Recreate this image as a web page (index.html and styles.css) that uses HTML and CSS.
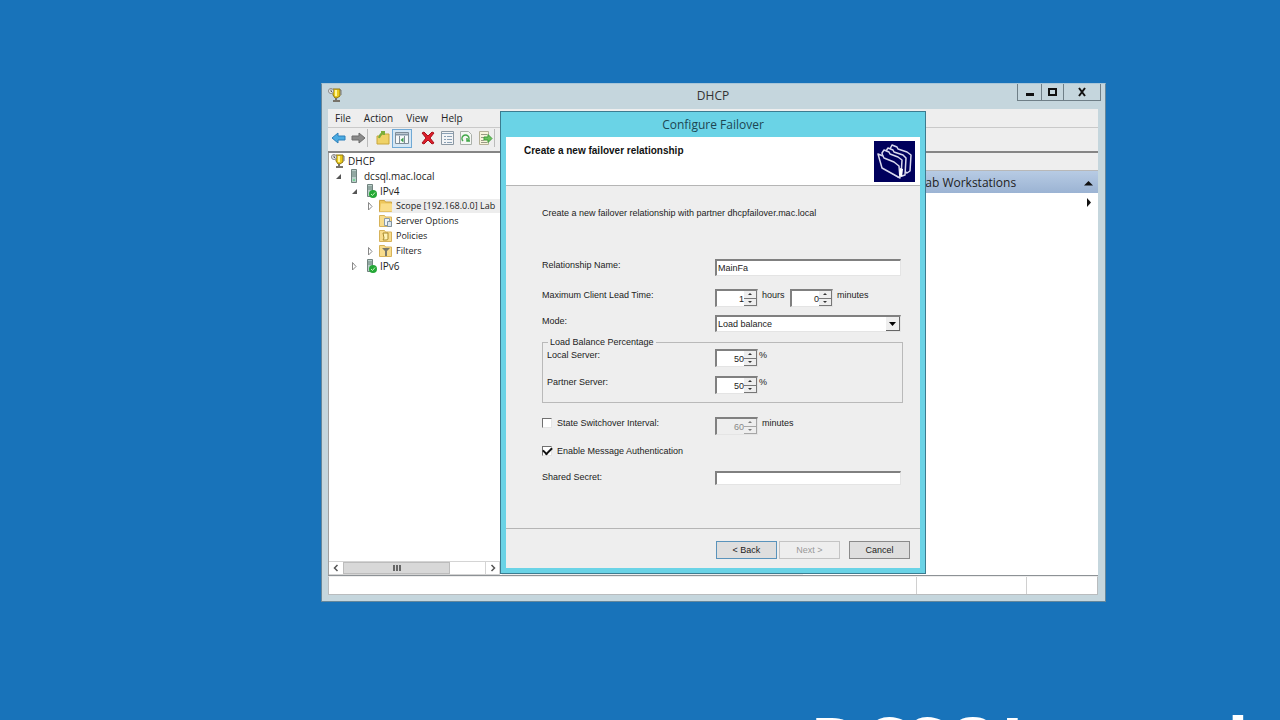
FILE: index.html
```html
<!DOCTYPE html>
<html lang="en">
<head>
<meta charset="utf-8">
<title>DHCP</title>
<link rel="stylesheet" href="styles.css">
</head>
<body>
<svg class="defs" width="0" height="0" aria-hidden="true">
  <symbol id="i-dhcp" viewBox="0 0 14 14"><path d="M5 1h7v7l-3 2H7L5 7z" fill="#e9c91c" stroke="#8d7410"/><path d="M8 2v6" stroke="#fff799" stroke-width="2"/><path d="M12 2h1v5" fill="none" stroke="#777"/><path d="M8 10v2M5 13h7" stroke="#77736a" stroke-width="2"/><circle cx="3" cy="3" r="2.500" fill="#eee" stroke="#888"/><path d="M3 1.500v2h1" fill="none" stroke="#555"/></symbol>
  <symbol id="i-server" viewBox="0 0 14 14"><path d="M4.500.500h5v13h-5z" fill="#b9cfc9" stroke="#71837f"/><path d="M5 3h4M5 5h4M5 7h4" stroke="#6b807b"/><path d="M6 11h2" stroke="#3d6" /></symbol>
  <symbol id="i-serverok" viewBox="0 0 14 14"><path d="M4.500.500h5v12h-5z" fill="#b9cfc9" stroke="#71837f"/><path d="M5 3h4M5 5h4" stroke="#6b807b"/><circle cx="10" cy="10" r="4" fill="#24a737"/><path d="M8 10l1.500 1.500L12 8.500" fill="none" stroke="#c4f5b8"/></symbol>
  <symbol id="i-folder" viewBox="0 0 14 14"><path d="M.500 1.500h5l1 1.500h6v9.500H.500z" fill="#edc65c" stroke="#cfa543"/><path d="M2 4.500h11v8H1z" fill="#fadd88"/></symbol>
  <symbol id="i-options" viewBox="0 0 14 14"><path d="M.500 1.500h5l1 1.500h6v9.500H.500z" fill="#f8dc8c" stroke="#d7b35a"/><path d="M5.500 4.500h5v7h-5z" fill="#eef3f7" stroke="#8a9aa8"/><path d="M8.500 7.500h4v5h-4z" fill="#dde5ea" stroke="#8193a1"/></symbol>
  <symbol id="i-policy" viewBox="0 0 14 14"><path d="M.500 1.500h5l1 1.500h6v9.500H.500z" fill="#f8dc8c" stroke="#d7b35a"/><path d="M4 4h5v6q0 1-2 1H4l1-2z" fill="#fff3b8" stroke="#a98a2c"/></symbol>
  <symbol id="i-filter" viewBox="0 0 14 14"><path d="M.500 1.500h5l1 1.500h6v9.500H.500z" fill="#f8dc8c" stroke="#d7b35a"/><path d="M3 4h8L8 7v5H6V7z" fill="#78786c"/></symbol>
</svg>

<main class="desktop">
  <p class="hostname">DCSQL.mac.local</p>

  <section class="window" aria-label="DHCP">
    <header class="titlebar">
      <svg class="app-icon"><use href="#i-dhcp"/></svg>
      <h1 class="title">DHCP</h1>
      <div class="caption-buttons">
        <button class="caption min" aria-label="Minimize"><svg width="10" height="10"><path d="M1 7.500h8" stroke="#111" stroke-width="3"/></svg></button>
        <button class="caption max" aria-label="Maximize"><svg width="10" height="10"><path d="M1 2h7v6H1z" fill="none" stroke="#111" stroke-width="2"/></svg></button>
        <button class="caption close" aria-label="Close"><svg width="10" height="10"><path d="M2 1l6 8M8 1L2 9" stroke="#111" stroke-width="2"/></svg></button>
      </div>
    </header>
    <div class="client">
      <nav class="menu">
        <button>File</button><button>Action</button><button>View</button><button>Help</button>
      </nav>
      <div class="toolbar">
        <button class="tool" aria-label="Back"><svg width="16" height="16"><path d="M1 8l6-5v3h7v4H7v3z" fill="#4aabe2" stroke="#2c7fb9"/></svg></button>
        <button class="tool" aria-label="Forward"><svg width="16" height="16"><path d="M15 8L9 3v3H2v4h7v3z" fill="#8a8a8a" stroke="#6d6d6d"/></svg></button>
        <span class="sep"></span>
        <button class="tool" aria-label="Up one level"><svg width="16" height="16"><path d="M2 6h4l1-2h7v10H2z" fill="#efd267" stroke="#c8a63c"/><path d="M4 8q1-4 4-5M6 2h3v3" fill="none" stroke="#7cae3a" stroke-width="2"/></svg></button>
        <button class="tool active" aria-label="Show console tree" aria-pressed="true"><svg width="16" height="16"><path d="M1.500 2.500h13v11h-13z" fill="#f6f8f9" stroke="#7e8c97"/><path d="M2 4.500h12" stroke="#8496a6" stroke-width="2"/><path d="M5.500 6v7M10.500 6v7" stroke="#7e8c97"/><path d="M9.500 7.500v5l-3-2.500z" fill="#3e9b4c"/></svg></button>
        <button class="tool" aria-label="Delete"><svg width="16" height="16"><path d="M2 3l2-1 4 4 4-4 2 1-4 5 4 5-2 1-4-4-4 4-2-1 4-5z" fill="#dd1f2b" stroke="#a80f19"/></svg></button>
        <button class="tool" aria-label="Properties"><svg width="16" height="16"><path d="M2.500 1.500h12v13h-12z" fill="#f2f4f6" stroke="#8b98a3"/><path d="M3 3.500h11M5 6.500h2M5 9.500h2M5 12.500h2M8 6.500h5M8 9.500h5M8 12.500h5" stroke="#8aa0b4"/></svg></button>
        <button class="tool" aria-label="Refresh"><svg width="16" height="16"><path d="M2.500 1.500h8l3 3v10h-11z" fill="#f5f7f4" stroke="#aab0aa"/><path d="M5 11a3.500 3.500 0 1 1 5 0M12 11H9V8" fill="none" stroke="#43a84a" stroke-width="1.500"/></svg></button>
        <button class="tool" aria-label="Export list"><svg width="16" height="16"><path d="M2.500 1.500h9v13h-9z" fill="#f8f4dc" stroke="#b5b098"/><path d="M4 4.500h6M4 7.500h3M4 10.500h3M4 12.500h6" stroke="#9a9a86"/><path d="M7 7h4V4.500L15 8.500l-4 4V10H7z" fill="#6cc25c" stroke="#3f9b3c"/></svg></button>
        <span class="sep"></span>
      </div>
      <div class="panes">
        <div class="tree-pane">
          <ul class="tree">
            <li><div class="node root"><svg class="ico"><use href="#i-dhcp"/></svg>DHCP</div></li>
            <li><div class="node l1"><svg class="arr"><path d="M8 3v5H3z" fill="#555"/></svg><svg class="ico"><use href="#i-server"/></svg>dcsql.mac.local</div></li>
            <li><div class="node l2"><svg class="arr"><path d="M8 3v5H3z" fill="#555"/></svg><svg class="ico"><use href="#i-serverok"/></svg>IPv4</div></li>
            <li><div class="node l3"><svg class="arr"><path d="M3.500 1.500L7 5.500 3.500 9z" fill="#fff" stroke="#888"/></svg><span class="selected"><svg class="ico"><use href="#i-folder"/></svg>Scope [192.168.0.0] Lab</span></div></li>
            <li><div class="node l3"><span class="arr"></span><svg class="ico"><use href="#i-options"/></svg>Server Options</div></li>
            <li><div class="node l3"><span class="arr"></span><svg class="ico"><use href="#i-policy"/></svg>Policies</div></li>
            <li><div class="node l3"><svg class="arr"><path d="M3.500 1.500L7 5.500 3.500 9z" fill="#fff" stroke="#888"/></svg><svg class="ico"><use href="#i-filter"/></svg>Filters</div></li>
            <li><div class="node l2"><svg class="arr"><path d="M3.500 1.500L7 5.500 3.500 9z" fill="#fff" stroke="#888"/></svg><svg class="ico"><use href="#i-serverok"/></svg>IPv6</div></li>
          </ul>
          <div class="scrollbar">
            <button class="scroll-btn" aria-label="Scroll left"><svg width="8" height="8"><path d="M5.500 1L2.500 4l3 3" fill="none" stroke="#555" stroke-width="1.500"/></svg></button>
            <div class="thumb"><i></i><i></i><i></i></div>
            <button class="scroll-btn right" aria-label="Scroll right"><svg width="8" height="8"><path d="M2.500 1l3 3-3 3" fill="none" stroke="#555" stroke-width="1.500"/></svg></button>
          </div>
        </div>
        <div class="list-pane"></div>
        <aside class="actions">
          <div class="actions-head"></div>
          <button class="actions-title"><span>Lab Workstations</span><svg width="9" height="6"><path d="M0 5.500L4.500 1 9 5.500z" fill="#111"/></svg></button>
          <button class="actions-more" aria-label="More actions"><svg width="6" height="9"><path d="M1 0l4 4.500L1 9z" fill="#111"/></svg></button>
        </aside>
      </div>
      <footer class="status"><span></span><span></span><span></span></footer>
    </div>
  </section>

  <section class="dialog" role="dialog" aria-labelledby="dlg-title">
    <h2 class="dialog-title" id="dlg-title">Configure Failover</h2>
    <form class="wizard">
      <header class="wizard-head">
        <h3>Create a new failover relationship</h3>
        <svg class="banner" viewBox="0 0 41 41"><path d="M0 0h41v41H0z" fill="#00005c"/><g fill="#00005c" stroke="#d9d9ee" stroke-width="1.500" stroke-linejoin="round"><path d="M16 8l2-4 5 2 1 2 9 3 4 3-1 16-3 2-14-9z"/><path d="M12 10l2-3 5 2 1 2 9 3 3 3-1 17-3 1-13-9z"/><path d="M8 12l2-3 5 2 1 2 8 3 4 3-1 16-3 1-12-8z"/><path d="M4 13l5 2 1 2 10 4 5 4 1 12L8 27z"/></g><path d="M26 27l3 1-1 8-3-2z" fill="#fff"/></svg>
      </header>
      <div class="wizard-body">
        <p class="intro">Create a new failover relationship with partner dhcpfailover.mac.local</p>

        <div class="row name-row">
          <label for="name">Relationship Name:</label>
          <input class="field" id="name" type="text" value="MainFa">
        </div>
        <div class="row lead-row">
          <label for="hours">Maximum Client Lead Time:</label>
          <div class="units">
            <span class="spin"><input id="hours" type="number" value="1"><span class="updown"><button type="button" aria-label="More hours"></button><button type="button" aria-label="Fewer hours"></button></span></span>
            <label class="unit hours" for="hours">hours</label>
            <span class="spin"><input id="mins" type="number" value="0"><span class="updown"><button type="button" aria-label="More minutes"></button><button type="button" aria-label="Fewer minutes"></button></span></span>
            <label class="unit" for="mins">minutes</label>
          </div>
        </div>
        <div class="row">
          <label for="mode">Mode:</label>
          <div class="combo"><select id="mode"><option>Load balance</option><option>Hot standby</option></select><span class="drop"><svg width="7" height="4"><path d="M0 0h7L3.500 4z" fill="#000"/></svg></span></div>
        </div>

        <fieldset class="group">
          <legend>Load Balance Percentage</legend>
          <div class="row local-row">
            <label for="local">Local Server:</label>
            <div class="units percent"><span class="spin"><input id="local" type="number" value="50"><span class="updown"><button type="button" aria-label="Increase local"></button><button type="button" aria-label="Decrease local"></button></span></span><span class="unit">%</span></div>
          </div>
          <div class="row">
            <label for="partner">Partner Server:</label>
            <div class="units percent"><span class="spin"><input id="partner" type="number" value="50"><span class="updown"><button type="button" aria-label="Increase partner"></button><button type="button" aria-label="Decrease partner"></button></span></span><span class="unit">%</span></div>
          </div>
        </fieldset>

        <div class="row switch-row">
          <label class="check"><input type="checkbox"> State Switchover Interval:</label>
          <div class="units"><span class="spin off"><input type="number" value="60" aria-label="Switchover minutes" disabled><span class="updown"><button type="button" aria-label="Increase interval" disabled></button><button type="button" aria-label="Decrease interval" disabled></button></span></span><span class="unit">minutes</span></div>
        </div>
        <label class="check auth-row"><input type="checkbox" checked> Enable Message Authentication</label>
        <div class="row">
          <label for="secret">Shared Secret:</label>
          <input class="field short" id="secret" type="password">
        </div>
      </div>
      <footer class="wizard-foot">
        <button class="btn default" type="button">&lt; Back</button>
        <button class="btn" type="button" disabled>Next &gt;</button>
        <button class="btn cancel" type="button">Cancel</button>
      </footer>
    </form>
  </section>
</main>
</body>
</html>
```
FILE: styles.css
```css
* { box-sizing: border-box; }
body { margin: 0; background: #1873ba; }
button, input, select { font: inherit; color: inherit; margin: 0; padding: 0; border: 0; border-radius: 0; background: none; outline: 0; }
h1, h2, h3, p, ul { margin: 0; padding: 0; font-weight: normal; }
svg { display: block; flex: none; }
.defs { position: absolute; }

.desktop { position: relative; height: 100vh; overflow: hidden; font: 10px/14px "Open Sans", sans-serif; color: #222; }
.hostname { position: absolute; left: 810px; top: 701px; font: bold 70px/80px "Open Sans", sans-serif; color: #fff; white-space: nowrap; }

/* Console window */
.window { position: absolute; inset: 83px 174px 118px 321px; display: flex; flex-direction: column; padding: 0 7px 6px 6px; background: #c5d6dd; border: 1px solid #65879b; border-top-color: #a9c6d8; }
.titlebar { display: flex; justify-content: space-between; height: 25px; padding-top: 4px; }
.app-icon { width: 14px; height: 14px; }
.title { flex: 1; text-align: center; font-size: 12px; line-height: 16px; padding-left: 67px; color: #333; }
.caption-buttons { display: flex; align-self: flex-start; border: 1px solid #6f7f87; border-top: 0; margin: -4px -3px 0 0; }
.caption { display: grid; place-items: center; width: 24px; height: 16px; border-right: 1px solid #6f7f87; }
.caption.max { width: 22px; }
.caption.close { width: 36px; border-right: 0; }
.client { flex: 1; display: flex; flex-direction: column; min-height: 0; background: #eee; }
.menu { display: flex; gap: 13px; height: 19px; padding: 0 7px 1px; border-bottom: 1px solid #c9c9c9; align-items: center; font-size: 10px; }
.toolbar { display: flex; align-items: center; height: 25px; padding: 0 0 3px 1px; border-bottom: 2px solid #858585; }
.tool { display: grid; place-items: center; width: 19px; height: 19px; }
.tool.active { background: #d5e7f5; border: 1px solid #70a9d5; width: 20px; margin-right: 6px; }
.sep { width: 1px; height: 18px; background: #bbb; margin-right: 5px; }
.panes { flex: 1; display: flex; min-height: 0; border-bottom: 1px solid #8d9296; }
.tree-pane { width: 174px; display: flex; flex-direction: column; justify-content: space-between; background: #fff; border-left: 1px solid #a0a0a0; }
.tree { list-style: none; white-space: nowrap; }
.node { display: flex; align-items: center; height: 15px; }
.root { padding-left: 2px; }
.l1 { padding-left: 4px; }
.l2 { padding-left: 20px; }
.l3 { padding-left: 36px; font-size: 9px; }
.arr { width: 14px; height: 10px; flex: none; }
.ico { width: 14px; height: 14px; margin-right: 3px; }
.selected { display: flex; align-items: center; flex: 1; background: #ededed; }
.scrollbar { display: flex; height: 14px; margin-right: 2px; border: 1px solid #d4d4d4; border-left: 0; }
.scroll-btn { display: grid; place-items: center; width: 14px; }
.scroll-btn.right { margin-left: auto; border-left: 1px solid #d4d4d4; }
.thumb { display: flex; justify-content: center; align-items: center; gap: 1px; width: 107px; background: #d8d8d8; border: 1px solid #bcbcbc; }
.thumb i { width: 2px; height: 6px; background: #666; }
.list-pane { width: 296px; margin: 0 3px 1px 2px; background: #fff; border: 1px solid #8d9296; border-top: 0; }
.actions { flex: 1; display: flex; flex-direction: column; background: #fff; }
.actions-head { height: 18px; background: #eee; border-bottom: 1px solid #b8b8b8; }
.actions-title { display: flex; align-items: center; justify-content: space-between; height: 22px; padding: 2px 5px 0 116px; background: linear-gradient(#b7cbe4, #9bb3d3); font-size: 12px; white-space: nowrap; }
.actions-more { align-self: flex-end; padding: 5px 6px 4px; }
.status { display: flex; height: 19px; background: #fff; border: 1px solid #b9bcbe; border-top: 1px solid #eee; }
.status span { width: 71px; border-left: 1px solid #d0d0d0; }
.status span:nth-child(1) { flex: 1; border: 0; }
.status span:nth-child(2) { width: 110px; }

/* Wizard dialog */
.dialog { position: absolute; left: 500px; top: 111px; width: 426px; padding: 0 5px 5px; background: #6ad3e6; border: 1px solid #3c7c90; color: #222; }
.dialog-title { font-size: 12px; line-height: 25px; text-align: center; color: #1d4652; }
.wizard { background: #eee; font: 9px/12px "Liberation Sans", Arial, sans-serif; }
.wizard-head { display: flex; justify-content: space-between; height: 49px; padding: 4px 5px 0 18px; background: #fff; border-bottom: 1px solid #b5b5b5; }
.wizard-head h3 { font-size: 10px; font-weight: bold; color: #111; padding-top: 4px; }
.banner { width: 41px; height: 41px; }
.wizard-body { padding: 21px 17px 43px 36px; }
.intro { margin-bottom: 40px; white-space: nowrap; }
.row { display: grid; grid-template-columns: 173px 1fr; align-items: start; margin-right: 2px; }
.name-row { margin-bottom: 13px; }
.lead-row { margin-bottom: 8px; }
.field, .spin, .combo { background: #fff; border: 1px solid #e4e4e4; border-top: 2px solid #808080; border-left: 2px solid #808080; }
.field { width: 100%; height: 17px; padding-left: 1px; }
.field.short { height: 14px; }
.units { display: flex; align-items: flex-start; }
.unit { padding-left: 4px; }
.unit.hours { width: 32px; }
.percent .unit { padding-left: 1px; }
.spin { display: flex; width: 43px; height: 18px; }
.spin input { flex: 1; min-width: 0; text-align: right; appearance: textfield; }
.spin input::-webkit-inner-spin-button { appearance: none; margin: 0; }
.updown { display: flex; flex-direction: column; width: 13px; background: #eee; }
.updown button { flex: 1; display: grid; place-items: center; border-right: 1px solid #777; border-bottom: 1px solid #777; }
.updown button::before { content: ""; border: 2px solid transparent; border-top-width: 0; border-bottom-color: #333; }
.updown button + button::before { border-width: 2px 2px 0; border-top-color: #333; }
.spin.off { background: #eee; color: #888; }
.spin.off button { opacity: .6; }
.combo { position: relative; height: 17px; }
.combo select { display: block; width: 100%; height: 14px; appearance: none; padding-left: 1px; }
.drop { position: absolute; top: 0; right: 0; bottom: 0; width: 14px; display: grid; place-items: center; background: #eee; border-right: 1px solid #666; border-bottom: 1px solid #666; pointer-events: none; }
.group { margin: 4px 0 14px; padding: 1px 0 8px 4px; border: 1px solid #b9b9b9; min-width: 0; }
.group legend { margin-left: 1px; padding: 0 2px; }
.group .row { grid-template-columns: 168px 1fr; }
.local-row { margin-bottom: 9px; }
.switch-row { margin-bottom: 10px; }
.check { display: flex; align-items: center; gap: 5px; height: 12px; }
.check input { appearance: none; width: 10px; height: 10px; background: #fff; border: 1px solid #e4e4e4; border-top-color: #707070; border-left-color: #707070; }
.check input:checked::before { content: ""; display: block; width: 7px; height: 4px; border: solid #111; border-width: 0 0 2px 2px; transform: rotate(-45deg); }
.auth-row { margin-bottom: 14px; }
.wizard-foot { display: flex; justify-content: flex-end; gap: 2px; padding: 12px 10px 9px; border-top: 1px solid #b5b5b5; }
.btn { width: 61px; height: 18px; background: #dedede; border: 1px solid #8a8a8a; color: #222; }
.btn.default { border-color: #5a93bb; }
.btn:disabled { background: #eee; border-color: #c4c4c4; color: #999; }
.btn.cancel { margin-left: 7px; }
```
